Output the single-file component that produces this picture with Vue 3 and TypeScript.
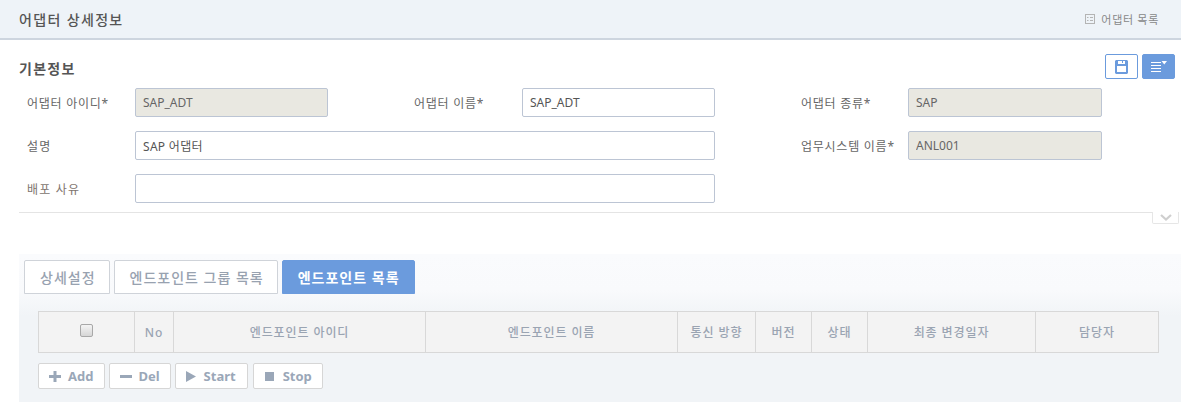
<script setup lang="ts">
const columns: { label: string; w: number }[] = [
  { label: 'No', w: 39 },
  { label: '엔드포인트 아이디', w: 252 },
  { label: '엔드포인트 이름', w: 252 },
  { label: '통신 방향', w: 78 },
  { label: '버전', w: 56 },
  { label: '상태', w: 56 },
  { label: '최종 변경일자', w: 168 },
  { label: '담당자', w: 123 },
]
const tabs = ['상세설정', '엔드포인트 그룹 목록']
</script>

<template>
  <div class="page">
    <header class="top">
      <h1>어댑터 상세정보</h1>
      <a class="list-link">
        <svg width="10" height="10" viewBox="0 0 10 10" fill="none" stroke="#b4b4b4">
          <rect x="0.5" y="0.5" width="9" height="9" />
          <path d="M2 3.5h1.5M2 6.5h1.5M5 3.5h3M5 6.5h3" />
        </svg>
        어댑터 목록
      </a>
    </header>

    <section class="basic">
      <div class="title-row">
        <h2>기본정보</h2>
        <div class="tools">
          <button class="tool outline" type="button">
            <svg width="13" height="14" viewBox="0 0 13 14">
              <path fill="#6b9bdd" fill-rule="evenodd" d="M1 0H12L13 1V13L12 14H1L0 13V1ZM3 1V4H10V1H8V3H7V1ZM2 6V12H11V6Z" />
            </svg>
          </button>
          <button class="tool solid" type="button">
            <svg width="16" height="11" viewBox="0 0 16 11" fill="#fff">
              <path d="M0 1h10v1H0zM0 4h10v1H0zM0 7h10v1H0zM0 10h10v1H0zM10.500 0h5.500L13.250 3.500z" />
            </svg>
          </button>
        </div>
      </div>

      <div class="form">
        <label>어댑터 아이디*</label>
        <input class="ro" value="SAP_ADT" readonly />
        <label>어댑터 이름*</label>
        <input value="SAP_ADT" />
        <label>어댑터 종류*</label>
        <input class="ro" value="SAP" readonly />

        <label class="tight">설명</label>
        <input class="wide spaced" value="SAP 어댑터" />
        <label>업무시스템 이름*</label>
        <input class="ro" value="ANL001" readonly />

        <label class="em">배포 사유</label>
        <input class="wide" value="" />
      </div>
      <div class="rule">
        <span class="fold">
          <svg width="12" height="7" viewBox="0 0 12 7" fill="none" stroke="#cfcfcf" stroke-width="2.200">
            <path d="M1 1l5 4.500L11 1" />
          </svg>
        </span>
      </div>
    </section>

    <section class="panel">
      <nav class="tabs">
        <button v-for="t in tabs" :key="t" class="tab" type="button">{{ t }}</button>
        <button class="tab active" type="button">엔드포인트 목록</button>
      </nav>
      <div class="body">
        <table>
          <thead>
            <tr>
              <th style="width: 96px"><span class="check"></span></th>
              <th v-for="c in columns" :key="c.label" :style="{ width: c.w + 'px' }">{{ c.label }}</th>
            </tr>
          </thead>
        </table>
        <div class="actions">
          <button class="act" type="button">
            <svg width="12" height="11" viewBox="0 0 12 11" fill="#9aa7b8"><path d="M4.500 0h3v4H12v3H7.500v4h-3V7H0V4h4.500z" /></svg>
            Add
          </button>
          <button class="act del" type="button">
            <svg width="12" height="11" viewBox="0 0 12 11" fill="#9aa7b8"><path d="M0 4h12v3H0z" /></svg>
            Del
          </button>
          <button class="act" type="button">
            <svg width="11" height="11" viewBox="0 0 11 11" fill="#9aa7b8"><path d="M0 0l10 5.500L0 11z" /></svg>
            Start
          </button>
          <button class="act stop" type="button">
            <svg width="11" height="9" viewBox="0 0 11 9" fill="#9aa7b8"><path d="M1 0h9v9H1z" /></svg>
            Stop
          </button>
        </div>
      </div>
    </section>
  </div>
</template>

<style scoped>
.page {
  width: 1181px;
  height: 402px;
  overflow: hidden;
  background: #fff;
  font-family: "Noto Sans", "Noto Sans CJK KR", sans-serif;
  font-size: 12px;
  color: #666;
}
.top {
  height: 38px;
  background: #eef3f8;
  border-bottom: 2px solid #cdd5df;
  display: flex;
  align-items: center;
  justify-content: space-between;
  padding: 0 22px 0 19px;
}
h1 {
  margin: 0;
  font-size: 14px;
  letter-spacing: 1.35px;
  font-weight: 500;
  color: #555;
}
.list-link {
  display: flex;
  align-items: center;
  gap: 6px;
  font-size: 11px;
  letter-spacing: 0.7px;
  color: #888;
}
.basic {
  padding-left: 19px;
}
.title-row {
  height: 48px;
  display: flex;
  justify-content: space-between;
  padding: 14px 6px 0 0;
  box-sizing: border-box;
}
h2 {
  margin: 0;
  padding-top: 5px;
  font-size: 14px;
  letter-spacing: 1.3px;
  line-height: 20px;
  font-weight: 700;
  color: #555;
}
.tools {
  display: flex;
  gap: 4px;
}
.tool {
  width: 33px;
  height: 25px;
  padding: 0;
  border-radius: 2px;
  display: flex;
  align-items: center;
  justify-content: center;
}
.outline {
  background: #fff;
  border: 1px solid #6b9bdd;
}
.solid {
  background: #6b9bdd;
  border: 1px solid #6b9bdd;
}
.form {
  display: grid;
  grid-template-columns: 108px 193px 86px 108px 193px 86px 107px 194px;
  grid-auto-rows: 29px;
  row-gap: 14px;
  padding-left: 8px;
  align-items: center;
}
.form label {
  color: #666;
  font-size: 12px;
  letter-spacing: 0.75px;
}
.form label:nth-of-type(2) {
  grid-column: 4;
}
.form label:nth-of-type(3),
.form label:nth-of-type(5) {
  grid-column: 7;
}
.form label.tight {
  letter-spacing: 1.2px;
}
.form label.em {
  color: #80746e;
  grid-column: 1;
  letter-spacing: 1.2px;
}
.form input {
  box-sizing: border-box;
  width: 100%;
  height: 29px;
  padding: 0 7px;
  border: 1px solid #bcc5d4;
  border-radius: 2px;
  background: #fff;
  font: inherit;
  color: #555;
  outline: none;
}
.form input.ro {
  background: #e9e8e1;
  color: #666;
}
.form input.wide {
  grid-column: 2 / span 4;
}
.form input.spaced {
  letter-spacing: 0.3px;
}
.rule {
  position: relative;
  margin-top: 9px;
  height: 1px;
  margin-right: 2px;
  background: #e4e4e4;
}
.fold {
  position: absolute;
  right: 0;
  top: 0;
  width: 25px;
  height: 11px;
  background: #fff;
  border: 1px solid #e6e6e6;
  border-top: 0;
  border-radius: 0 0 2px 2px;
  display: flex;
  align-items: center;
  justify-content: center;
}
.panel {
  margin: 41px 0 0 19px;
  height: 148px;
  background: linear-gradient(#fafbfd 0, #f9fafc 36px, #f1f4f7 62px);
}
.tabs {
  display: flex;
  gap: 4px;
  padding: 6px 0 0 5px;
}
.tab {
  height: 34px;
  padding: 0 13px 0 15px;
  background: #fff;
  border: 1px solid #cfd3d9;
  border-radius: 2px 2px 0 0;
  font: inherit;
  font-size: 14px;
  letter-spacing: 1px;
  font-weight: 500;
  color: #98a2b0;
}
.tab.active {
  padding-right: 14px;
  background: #6b9bdd;
  border-color: #6b9bdd;
  color: #fff;
  font-weight: 700;
}
.body {
  padding: 17px 22px 0 19px;
}
table {
  width: 1120px;
  table-layout: fixed;
  border-collapse: collapse;
}
th {
  box-sizing: border-box;
  height: 41px;
  padding: 0;
  background: #f3f3f3;
  border: 1px solid #d8d8d8;
  font-size: 12px;
  letter-spacing: 0.9px;
  font-weight: 500;
  color: #9aa4b2;
}
.check {
  display: block;
  width: 11px;
  height: 11px;
  margin: -3px auto 0;
  background: linear-gradient(#f4f4f4, #d6d6d6);
  border: 1px solid #a8a8a8;
  border-radius: 2px;
}
.actions {
  display: flex;
  gap: 4px;
  margin-top: 10px;
}
.act {
  height: 26px;
  padding: 0 11px 0 10px;
  display: flex;
  align-items: center;
  gap: 7px;
  background: #fff;
  border: 1px solid #d6d6d6;
  border-radius: 2px;
  font: inherit;
  font-size: 13px;
  font-weight: 700;
  color: #9aa7b8;
}
.act.del {
  gap: 6px;
  padding-right: 10px;
}
.act.stop {
  margin-left: 1px;
  padding-right: 10px;
  gap: 8px;
}
</style>
